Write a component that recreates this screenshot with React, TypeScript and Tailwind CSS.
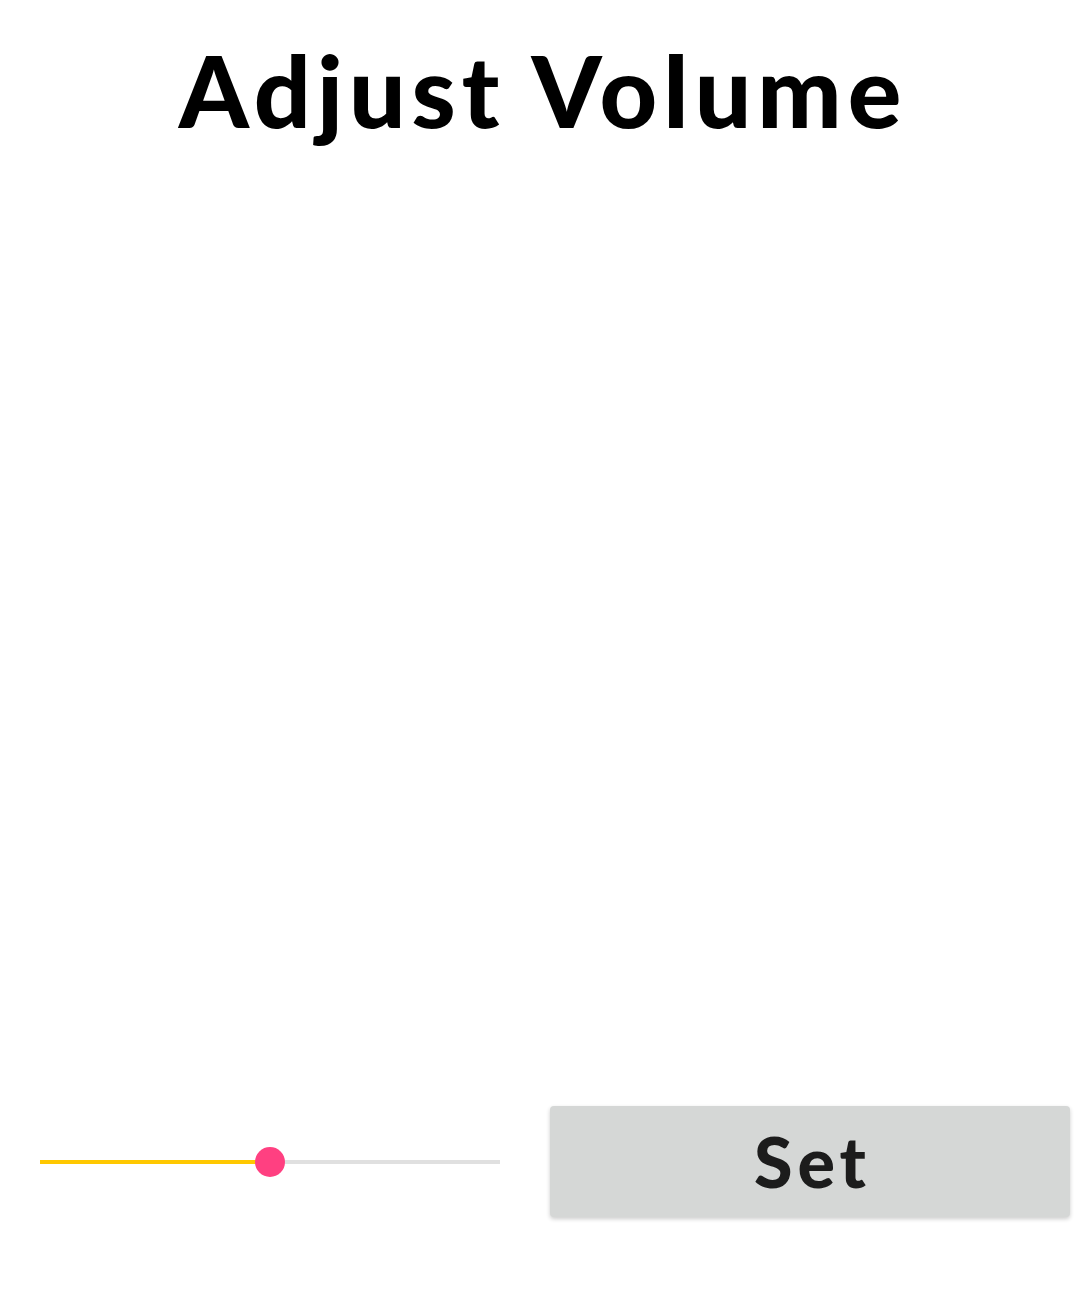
import React from "react";

export default function App() {
  const value = 50;
  return (
    <div className="w-[1076px] h-[1292px] bg-white flex flex-col" style={{ fontFamily: "Lato, 'Noto Sans', sans-serif" }}>
      <h1 className="text-center text-[100px] leading-none font-black text-black tracking-[6px] pt-[39px] pl-[10px]">
        Adjust Volume
      </h1>
      <div className="flex-1" />
      <div className="flex items-center h-[111px] mb-[75px]">
        <div className="ml-[40px] w-[460px] relative h-[30px] flex items-center">
          <div className="h-[4px] w-full bg-[#e0e0e0] flex">
            <div className="h-full bg-[#ffc800]" style={{ width: `${value}%` }} />
          </div>
          <div
            className="absolute top-0 w-[30px] h-[30px] rounded-full bg-[#ff4081] -translate-x-1/2"
            style={{ left: `${value}%` }}
          />
        </div>
        <button className="ml-[50px] w-[520px] h-[111px] bg-[#d5d7d6] rounded-[4px] shadow-[0_2px_4px_rgba(0,0,0,0.2)] text-[70px] font-black text-[#1c1c1c] tracking-[5px] pl-[5px] flex items-center justify-center">
          Set
        </button>
      </div>
    </div>
  );
}
